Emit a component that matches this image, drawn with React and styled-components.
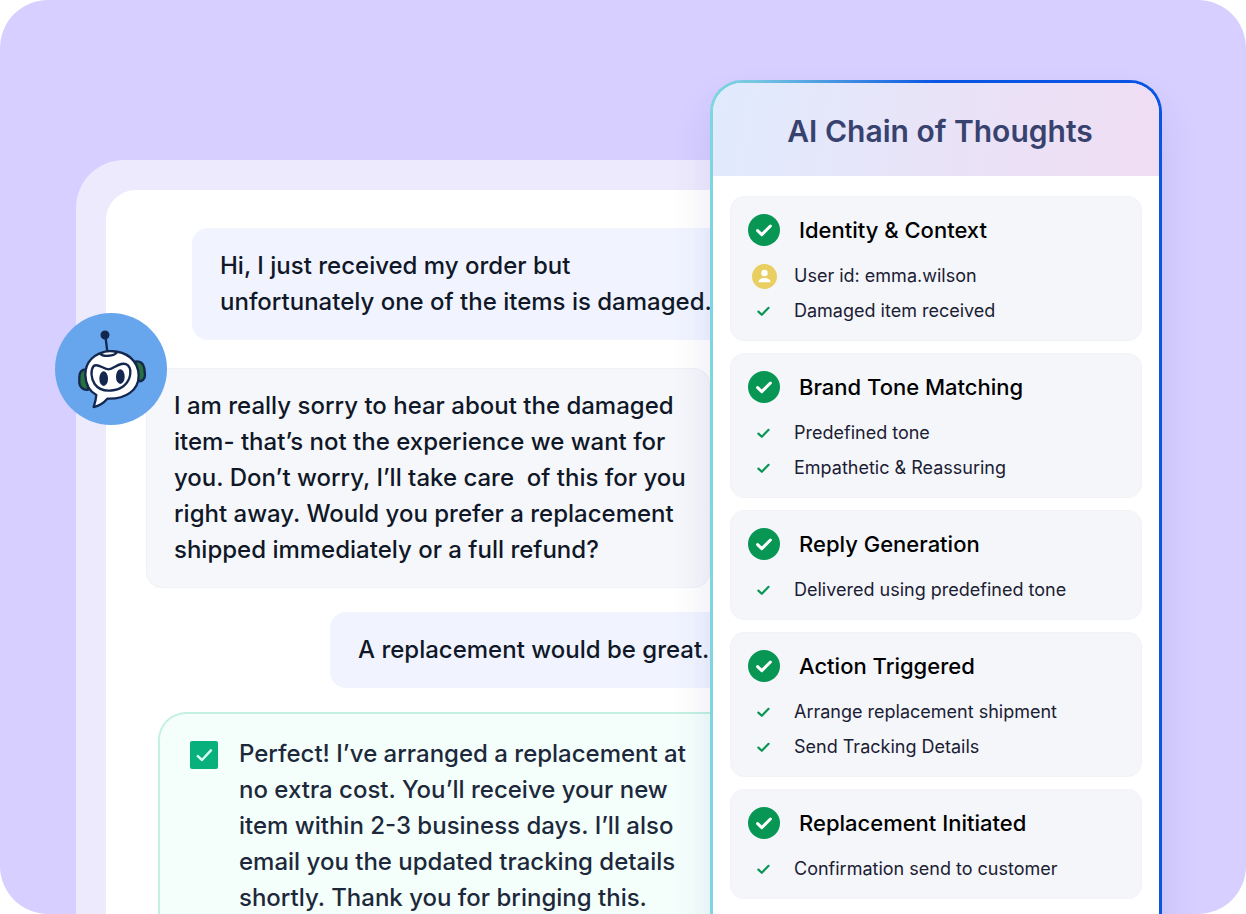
import React from "react";
import styled, { createGlobalStyle } from "styled-components";

const thoughts = [
  {
    title: "Identity & Context",
    items: [
      { icon: "user", text: "User id: emma.wilson" },
      { icon: "check", text: "Damaged item received" },
    ],
  },
  {
    title: "Brand Tone Matching",
    items: [
      { icon: "check", text: "Predefined tone" },
      { icon: "check", text: "Empathetic & Reassuring" },
    ],
  },
  {
    title: "Reply Generation",
    items: [{ icon: "check", text: "Delivered using predefined tone" }],
  },
  {
    title: "Action Triggered",
    items: [
      { icon: "check", text: "Arrange replacement shipment" },
      { icon: "check", text: "Send Tracking Details" },
    ],
  },
  {
    title: "Replacement Initiated",
    items: [{ icon: "check", text: "Confirmation send to customer" }],
  },
];

const DoneIcon = () => (
  <svg width="32" height="32" viewBox="0 0 32 32" fill="none" aria-hidden="true">
    <circle cx="16" cy="16" r="16" fill="#089654" />
    <path
      d="M9.6 16.6l4.2 4 8.6-8.6"
      stroke="#fff"
      strokeWidth="3"
      strokeLinecap="round"
      strokeLinejoin="round"
    />
  </svg>
);

const UserIcon = () => (
  <svg width="25" height="25" viewBox="0 0 24 24" aria-hidden="true">
    <circle cx="12" cy="12" r="12" fill="#e9cf62" />
    <circle cx="12" cy="8.7" r="3.1" fill="#fff" />
    <path d="M6.2 17.6c0-2.7 2.4-4.2 5.8-4.2s5.8 1.5 5.8 4.2z" fill="#fff" />
  </svg>
);

const CheckIcon = () => (
  <svg width="14" height="12" viewBox="0 0 14 12" fill="none" aria-hidden="true">
    <path
      d="M1.4 6.6l3.4 3.2 6.8-7"
      stroke="#089654"
      strokeWidth="2.2"
      strokeLinecap="round"
      strokeLinejoin="round"
    />
  </svg>
);

const Robot = () => (
  <svg viewBox="44 38 336 336" role="img" aria-label="Assistant">
    <circle cx="212" cy="206" r="168" fill="#67a6ec" />
    <g stroke="#14284f" strokeWidth="7" strokeLinejoin="round" strokeLinecap="round">
      <path d="M195 106L201 154" fill="none" />
      <circle cx="194" cy="104" r="10" fill="#14284f" />
      <path
        d="M137 207c-11-1-20 8-20 22v19c0 12 12 23 27 20z"
        fill="#27703f"
      />
      <path
        d="M285 184c14-3 25 5 27 20l2 19c1 13-9 21-22 20z"
        fill="#27703f"
      />
      <path
        d="M206 153c-44 3-72 33-71 71 1 29 13 49 33 60-1 13-4 24-8 36 17-4 31-13 41-25 55 2 94-25 94-69 0-44-37-77-89-73z"
        fill="#fff"
      />
      <path d="M179 160c9 10 42 8 51-4-16-5-36-4-51 4z" fill="#fff" />
      <path
        d="M160 197c-10 12-8 38 3 54 12 17 35 23 60 18 31-6 47-30 47-54 0-17-10-28-27-24-17 4-24 15-39 16-16 0-31-20-44-10z"
        fill="#fff"
      />
    </g>
    <ellipse cx="190" cy="235" rx="13" ry="22" fill="#14284f" />
    <ellipse cx="240" cy="229" rx="13" ry="22" fill="#14284f" />
  </svg>
);

export default function App() {
  return (
    <>
      <GlobalStyle />
      <Stage>
        <ChatFrame>
          <Chat>
            <Bubble $indent={86}>
              Hi, I just received my order but
              <br />
              unfortunately one of the items is damaged.
            </Bubble>
            <BotBubble>
              <Avatar>
                <Robot />
              </Avatar>
              I am really sorry to hear about the damaged
              <br />
              item- that’s not the experience we want for
              <br />
              you. Don’t worry, I’ll take care&nbsp; of this for you
              <br />
              right away. Would you prefer a replacement
              <br />
              shipped immediately or a full refund?
            </BotBubble>
            <Bubble $indent={224}>A replacement would be great.</Bubble>
            <SuccessBubble>
              <Tick>
                <TickInput type="checkbox" defaultChecked aria-labelledby="confirmation" />
                <TickMark viewBox="0 0 28 28" fill="none" aria-hidden="true">
                  <path
                    d="M7 14.4l5 4.6 9.6-10.4"
                    stroke="#d9fbee"
                    strokeWidth="2.4"
                    strokeLinejoin="round"
                  />
                </TickMark>
              </Tick>
              <p id="confirmation">
                Perfect! I’ve arranged a replacement at
                <br />
                no extra cost. You’ll receive your new
                <br />
                item within 2-3 business days. I’ll also
                <br />
                email you the updated tracking details
                <br />
                shortly. Thank you for bringing this.
              </p>
            </SuccessBubble>
          </Chat>
        </ChatFrame>
        <Panel>
          <PanelHeader>
            <h1>AI Chain of Thoughts</h1>
          </PanelHeader>
          <Steps>
            {thoughts.map((step) => (
              <Step key={step.title}>
                <StepTitle>
                  <DoneIcon />
                  <h2>{step.title}</h2>
                </StepTitle>
                <StepItems>
                  {step.items.map((item) => (
                    <StepItem key={item.text}>
                      <IconSlot>
                        {item.icon === "user" ? <UserIcon /> : <CheckIcon />}
                      </IconSlot>
                      {item.text}
                    </StepItem>
                  ))}
                </StepItems>
              </Step>
            ))}
          </Steps>
        </Panel>
      </Stage>
    </>
  );
}

const GlobalStyle = createGlobalStyle`
  * {
    box-sizing: border-box;
  }
  body {
    margin: 0;
    background: #fff;
    font-family: Inter, "Liberation Sans", sans-serif;
  }
  h1, h2, p, ul {
    margin: 0;
    padding: 0;
  }
  svg {
    display: block;
    flex-shrink: 0;
  }
`;

const Stage = styled.main`
  display: flex;
  align-items: stretch;
  height: 100vh;
  padding: 80px 84px 0 76px;
  border-radius: 48px;
  background: #d7cfff;
  overflow: hidden;
`;

const ChatFrame = styled.section`
  flex: 1;
  min-width: 0;
  margin: 80px -40px 0 0;
  padding: 30px 0 0 30px;
  border-radius: 48px 0 0 0;
  background: #eeeafd;
`;

const Chat = styled.div`
  display: flex;
  flex-direction: column;
  align-items: flex-start;
  min-height: 100%;
  padding-top: 38px;
  border-radius: 30px 0 0 0;
  background: #fff;
  font-size: 24px;
  font-weight: 500;
  line-height: 36px;
  color: #101828;
  white-space: nowrap;
`;

const Bubble = styled.div`
  margin-left: ${(props) => props.$indent}px;
  padding: 20px 28px;
  border-radius: 16px;
  background: #f1f4ff;
`;

const BotBubble = styled.div`
  position: relative;
  width: 564px;
  margin: 28px 0 24px 40px;
  padding: 19px 27px;
  border: 1px solid #eff1f6;
  border-radius: 16px;
  background: #f6f7fb;
`;

const Avatar = styled.div`
  position: absolute;
  top: -56px;
  left: -92px;
  width: 112px;
  height: 112px;
`;

const SuccessBubble = styled.div`
  display: flex;
  align-items: flex-start;
  align-self: stretch;
  gap: 21px;
  margin: 24px 0 0 52px;
  padding: 22px 30px;
  border: 2px solid #c5f1e0;
  border-right: 0;
  border-radius: 28px 0 0 28px;
  background: #f4fffc;
  color: #1d293b;
`;

const Tick = styled.span`
  display: grid;
  margin-top: 5px;
`;

const TickInput = styled.input`
  grid-area: 1 / 1;
  appearance: none;
  width: 28px;
  height: 28px;
  margin: 0;
  border-radius: 2px;
  background: #08b07c;
`;

const TickMark = styled.svg`
  grid-area: 1 / 1;
  width: 28px;
  height: 28px;
  pointer-events: none;
`;

const Panel = styled.aside`
  z-index: 1;
  flex: 0 0 452px;
  margin-bottom: -40px;
  border: 3px solid transparent;
  border-radius: 32px 32px 0 0;
  background:
    linear-gradient(#fff, #fff) padding-box,
    linear-gradient(90deg, #7fd6e0 0%, #75c6e2 10%, #0b55e4 50%, #0b55e4 100%) border-box;
  box-shadow: 0 24px 40px rgba(60, 60, 160, 0.12);
`;

const PanelHeader = styled.header`
  display: flex;
  align-items: center;
  justify-content: center;
  height: 93px;
  padding: 2px 0 0 8px;
  border-radius: 29px 29px 0 0;
  background: linear-gradient(100deg, #e0ebfd 0%, #e8e4f8 45%, #f0ddf3 100%);

  h1 {
    font-size: 30px;
    font-weight: 600;
    line-height: 36px;
    color: #37426f;
  }
`;

const Steps = styled.div`
  display: flex;
  flex-direction: column;
  gap: 12px;
  padding: 20px 17px;
`;

const Step = styled.section`
  padding: 17px;
  border: 1px solid #f1f3f6;
  border-radius: 14px;
  background: #f5f6fa;
`;

const StepTitle = styled.div`
  display: flex;
  align-items: center;
  gap: 19px;

  h2 {
    font-size: 22px;
    font-weight: 500;
    line-height: 32px;
    color: #000;
  }
`;

const StepItems = styled.ul`
  display: flex;
  flex-direction: column;
  gap: 11px;
  padding: 18px 0 0;
  list-style: none;
`;

const StepItem = styled.li`
  display: flex;
  align-items: center;
  gap: 14px;
  height: 24px;
  font-size: 18px;
  line-height: 24px;
  color: #1a2033;
`;

const IconSlot = styled.span`
  display: flex;
  justify-content: center;
  width: 32px;
`;
